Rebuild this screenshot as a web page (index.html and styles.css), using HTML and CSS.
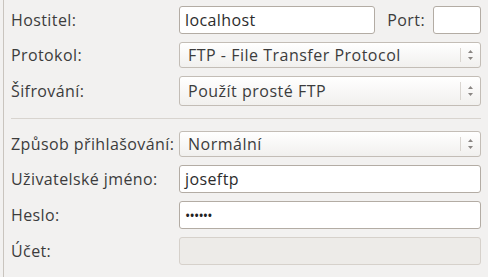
FILE: index.html
```html
<!DOCTYPE html>
<html lang="cs">
<head>
    <meta charset="UTF-8">
    <title>Nastavení serveru</title>
    <link rel="stylesheet" href="styles.css">
</head>
<body>
    <div class="frame">
        <div class="form">
            <label class="lbl">Hostitel:</label>
            <div class="host-row">
                <div class="entry host">localhost</div>
                <label class="port-lbl">Port:</label>
                <div class="entry port"></div>
            </div>

            <label class="lbl">Protokol:</label>
            <div class="combo h26">
                <span class="combo-text">FTP - File Transfer Protocol</span>
                <span class="combo-sep"></span>
                <svg class="arrows" width="7" height="12" viewBox="0 0 7 12">
                    <path d="M3.5 1 L6 4 L1 4 Z" fill="#8a8683"/>
                    <path d="M1 8 L6 8 L3.5 11 Z" fill="#8a8683"/>
                </svg>
            </div>

            <label class="lbl">Šifrování:</label>
            <div class="combo h30">
                <span class="combo-text">Použít prosté FTP</span>
                <span class="combo-sep"></span>
                <svg class="arrows" width="7" height="12" viewBox="0 0 7 12">
                    <path d="M3.5 1 L6 4 L1 4 Z" fill="#8a8683"/>
                    <path d="M1 8 L6 8 L3.5 11 Z" fill="#8a8683"/>
                </svg>
            </div>

            <div class="separator"></div>

            <label class="lbl">Způsob přihlašování:</label>
            <div class="combo h26">
                <span class="combo-text">Normální</span>
                <span class="combo-sep"></span>
                <svg class="arrows" width="7" height="12" viewBox="0 0 7 12">
                    <path d="M3.5 1 L6 4 L1 4 Z" fill="#8a8683"/>
                    <path d="M1 8 L6 8 L3.5 11 Z" fill="#8a8683"/>
                </svg>
            </div>

            <label class="lbl">Uživatelské jméno:</label>
            <div class="entry">joseftp</div>

            <label class="lbl">Heslo:</label>
            <div class="entry dots">••••••</div>

            <label class="lbl">Účet:</label>
            <div class="entry disabled"></div>
        </div>
    </div>
</body>
</html>
```

FILE: styles.css
```css
body {
    margin: 0;
    background-color: #f2f1f0;
    font-family: "Open Sans", "DejaVu Sans", sans-serif;
    font-size: 16px;
    letter-spacing: 0.4px;
    color: #3c3c3c;
}
.frame {
    margin-left: 3px;
    border-left: 1px solid #c9c4be;
    height: 277px;
    box-sizing: border-box;
    padding: 6px 7px 0 7px;
}
.form {
    display: grid;
    grid-template-columns: 168px 1fr;
    row-gap: 8px;
    align-items: center;
}
.lbl {
    white-space: nowrap;
}
.host-row {
    display: flex;
    align-items: center;
}
.entry {
    height: 28px;
    box-sizing: border-box;
    background-color: #fff;
    border: 1px solid #b3aca4;
    border-radius: 3px;
    padding: 0 5px;
    display: flex;
    align-items: center;
    color: #2c2c2c;
}
.entry.host {
    flex: 1;
}
.port-lbl {
    margin: 0 8px 0 12px;
}
.entry.port {
    flex: none;
    width: 48px;
}
.entry.dots {
    font-size: 14px;
    letter-spacing: -0.8px;
    color: #222;
}
.entry.disabled {
    background-color: #edebe8;
    border-color: #d6d1cb;
}
.combo {
    box-sizing: border-box;
    border: 1px solid #c3bdb6;
    border-radius: 3px;
    background: linear-gradient(#ffffff, #f1f0ee);
    display: flex;
    align-items: center;
    padding-left: 8px;
}
.h26 { height: 26px; }
.h30 { height: 30px; }
.combo-text {
    flex: 1;
    letter-spacing: 0.5px;
}
.combo-sep {
    width: 1px;
    align-self: stretch;
    margin: 5px 0;
    background-color: #d9d5d0;
}
.arrows {
    margin: 0 6px 0 6px;
}
.separator {
    grid-column: 1 / 3;
    height: 1px;
    background-color: #d8d4cf;
    margin: 4px 0;
}
```
